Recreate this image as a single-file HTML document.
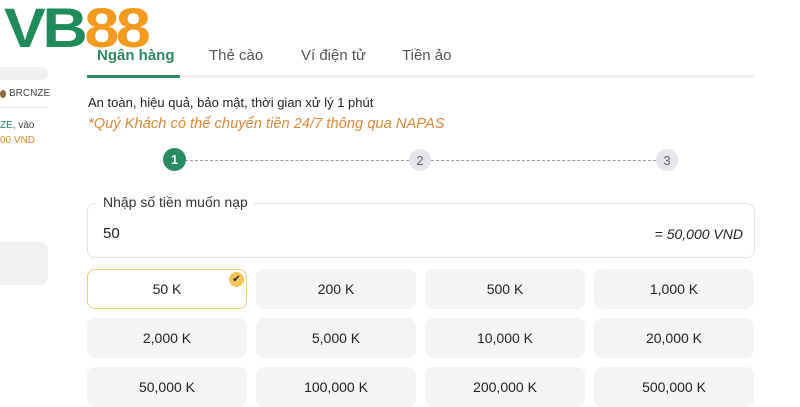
<!DOCTYPE html>
<html><head><meta charset="utf-8"><style>
*{margin:0;padding:0;box-sizing:border-box}
body{width:800px;height:400px;overflow:hidden;background:#fff;font-family:"Liberation Sans",sans-serif;position:relative;color:#222}
.a{position:absolute}
.btn{position:absolute;width:160px;height:40px;background:#f3f4f6;border-radius:8px;display:flex;align-items:center;justify-content:center;font-size:14px;color:#222}
</style></head><body>
<div class="a" style="left:4px;top:-4px;font-size:56px;font-weight:900;letter-spacing:-3px;line-height:64px;transform:scaleX(1.12);transform-origin:left">
<span style="color:#1f8a5a">VB</span><span style="color:#f59a1d">88</span></div>
<div class="a" style="left:0;top:67px;width:48px;height:13px;background:#eef0f2;border-radius:0 7px 7px 0"></div>
<div class="a" style="left:0;top:90px;width:6px;height:8px;border-radius:50%;background:#8a6a3a"></div>
<div class="a" style="left:9px;top:88px;font-size:10px;color:#444">BRCNZE</div>
<div class="a" style="left:0;top:107px;width:48px;height:1px;background:#e5e5e5"></div>
<div class="a" style="left:0;top:120px;font-size:10px;color:#444"><span style="color:#2a8a62">ZE</span>, vào</div>
<div class="a" style="left:0;top:135px;font-size:10px;color:#e08a2a">00 VND</div>
<div class="a" style="left:0;top:242px;width:48px;height:43px;background:#f0f1f3;border-radius:0 8px 8px 0"></div>

<div class="a" style="left:97px;top:47px;font-size:15px;font-weight:bold;color:#2a8a62">Ngân hàng</div>
<div class="a" style="left:209px;top:47px;font-size:15px;color:#555">Thẻ cào</div>
<div class="a" style="left:301px;top:47px;font-size:15px;color:#555">Ví điện tử</div>
<div class="a" style="left:402px;top:47px;font-size:15px;color:#555">Tiền ảo</div>
<div class="a" style="left:87px;top:75px;width:668px;height:3px;background:#f0f1f3"></div>
<div class="a" style="left:87px;top:75px;width:93px;height:3px;background:#2a8a62"></div>

<div class="a" style="left:88px;top:95px;font-size:13px;color:#222">An toàn, hiệu quả, bảo mật, thời gian xử lý 1 phút</div>
<div class="a" style="left:88px;top:116px;font-size:14.7px;font-style:italic;color:#d98a3a">*Quý Khách có thể chuyển tiền 24/7 thông qua NAPAS</div>

<div class="a" style="left:185px;top:160px;width:224px;border-top:1px dashed #999"></div>
<div class="a" style="left:431px;top:160px;width:225px;border-top:1px dashed #999"></div>
<div class="a" style="left:163px;top:148px;width:23px;height:23px;border-radius:50%;background:#2a8a62;color:#fff;font-size:13px;font-weight:bold;display:flex;align-items:center;justify-content:center">1</div>
<div class="a" style="left:409px;top:149px;width:22px;height:22px;border-radius:50%;background:#e3e5ea;color:#666;font-size:13px;display:flex;align-items:center;justify-content:center">2</div>
<div class="a" style="left:656px;top:149px;width:22px;height:22px;border-radius:50%;background:#e3e5ea;color:#666;font-size:13px;display:flex;align-items:center;justify-content:center">3</div>

<div class="a" style="left:87px;top:203px;width:668px;height:55px;border:1px solid #e3e3e3;border-radius:8px"></div>
<div class="a" style="left:97px;top:194px;background:#fff;padding:0 6px;font-size:14px;color:#333">Nhập số tiền muốn nạp</div>
<div class="a" style="left:103px;top:225px;font-size:15px;color:#222">50</div>
<div class="a" style="left:620px;top:226px;width:123px;text-align:right;font-size:14px;font-style:italic;color:#222">= 50,000 VND</div>

<div class="btn" style="left:87px;top:269px;background:#fff;border:1px solid #f0cf7a">50 K</div>
<div class="a" style="left:229px;top:272px;width:15px;height:15px;border-radius:50%;background:#f3c55a;color:#222;font-size:10px;display:flex;align-items:center;justify-content:center">✔</div>
<div class="btn" style="left:256px;top:269px">200 K</div>
<div class="btn" style="left:425px;top:269px">500 K</div>
<div class="btn" style="left:594px;top:269px">1,000 K</div>
<div class="btn" style="left:87px;top:318px">2,000 K</div>
<div class="btn" style="left:256px;top:318px">5,000 K</div>
<div class="btn" style="left:425px;top:318px">10,000 K</div>
<div class="btn" style="left:594px;top:318px">20,000 K</div>
<div class="btn" style="left:87px;top:367px">50,000 K</div>
<div class="btn" style="left:256px;top:367px">100,000 K</div>
<div class="btn" style="left:425px;top:367px">200,000 K</div>
<div class="btn" style="left:594px;top:367px">500,000 K</div>
</body></html>
